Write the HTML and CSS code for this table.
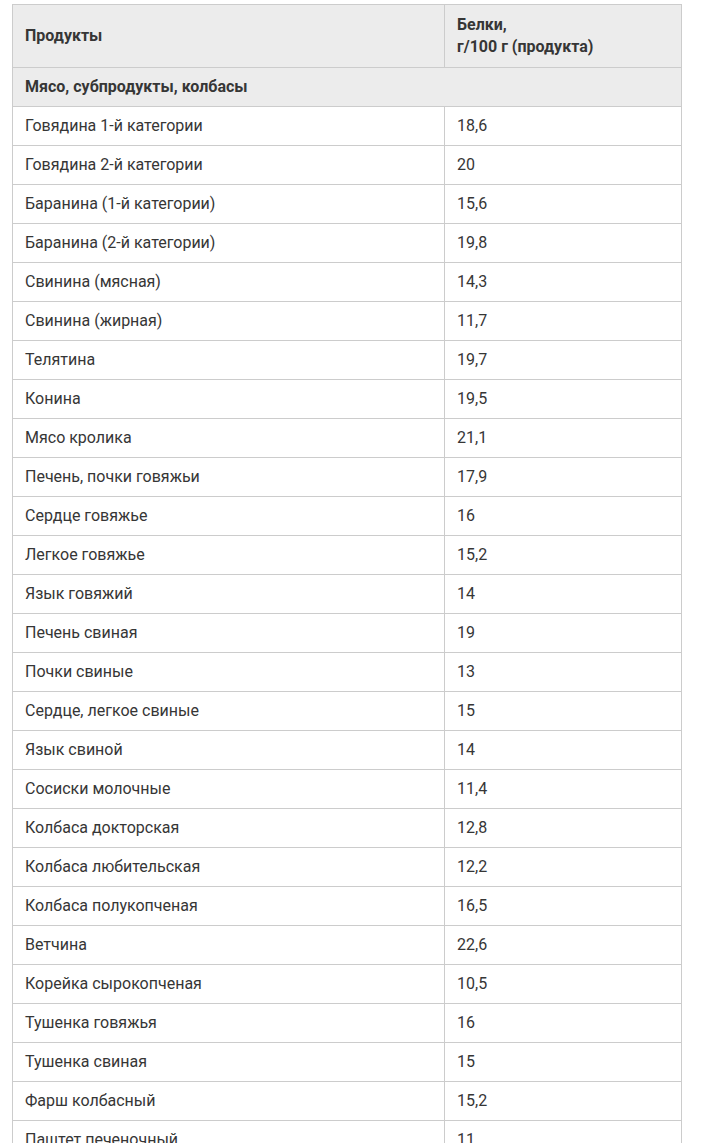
FILE: index.html
```html
<!DOCTYPE html>
<html lang="ru">
<head>
<meta charset="utf-8">
<title>Белки в продуктах</title>
<link rel="stylesheet" href="styles.css">
</head>
<body>
<table class="nutri">
  <thead>
    <tr><th class="col-name">Продукты</th><th class="col-val">Белки,<br>г/100 г (продукта)</th></tr>
  </thead>
  <tbody>
    <tr class="cat"><td colspan="2">Мясо, субпродукты, колбасы</td></tr>
    <tr><td>Говядина 1-й категории</td><td>18,6</td></tr>
    <tr><td>Говядина 2-й категории</td><td>20</td></tr>
    <tr><td>Баранина (1-й категории)</td><td>15,6</td></tr>
    <tr><td>Баранина (2-й категории)</td><td>19,8</td></tr>
    <tr><td>Свинина (мясная)</td><td>14,3</td></tr>
    <tr><td>Свинина (жирная)</td><td>11,7</td></tr>
    <tr><td>Телятина</td><td>19,7</td></tr>
    <tr><td>Конина</td><td>19,5</td></tr>
    <tr><td>Мясо кролика</td><td>21,1</td></tr>
    <tr><td>Печень, почки говяжьи</td><td>17,9</td></tr>
    <tr><td>Сердце говяжье</td><td>16</td></tr>
    <tr><td>Легкое говяжье</td><td>15,2</td></tr>
    <tr><td>Язык говяжий</td><td>14</td></tr>
    <tr><td>Печень свиная</td><td>19</td></tr>
    <tr><td>Почки свиные</td><td>13</td></tr>
    <tr><td>Сердце, легкое свиные</td><td>15</td></tr>
    <tr><td>Язык свиной</td><td>14</td></tr>
    <tr><td>Сосиски молочные</td><td>11,4</td></tr>
    <tr><td>Колбаса докторская</td><td>12,8</td></tr>
    <tr><td>Колбаса любительская</td><td>12,2</td></tr>
    <tr><td>Колбаса полукопченая</td><td>16,5</td></tr>
    <tr><td>Ветчина</td><td>22,6</td></tr>
    <tr><td>Корейка сырокопченая</td><td>10,5</td></tr>
    <tr><td>Тушенка говяжья</td><td>16</td></tr>
    <tr><td>Тушенка свиная</td><td>15</td></tr>
    <tr><td>Фарш колбасный</td><td>15,2</td></tr>
    <tr><td>Паштет печеночный</td><td>11</td></tr>
  </tbody>
</table>
</body>
</html>
```
FILE: styles.css
```css
html, body {
  margin: 0;
  padding: 0;
  background: #ffffff;
}
body {
  padding: 4px 0 0 12px;
  font-family: Roboto, "Liberation Sans", Arial, sans-serif;
  font-size: 16px;
  color: #363636;
}
.nutri {
  border-collapse: collapse;
  width: 670px;
  table-layout: fixed;
}
.nutri th,
.nutri td {
  border: 1px solid #cccccc;
  padding: 8px 12px;
  line-height: 22px;
  text-align: left;
  vertical-align: middle;
}
.nutri th {
  background: #ececec;
  font-weight: 700;
  padding-top: 9px;
  padding-bottom: 9px;
}
.col-name { width: 407px; }
.nutri .cat td {
  background: #ececec;
  font-weight: 700;
}
```
